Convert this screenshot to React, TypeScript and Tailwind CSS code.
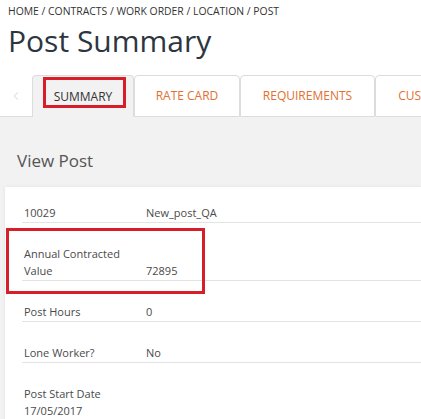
import React from "react";
import { ChevronLeft } from "lucide-react";

const font = { fontFamily: '"Open Sans", "Liberation Sans", sans-serif' };

type Row = {
  label: React.ReactNode;
  value?: string;
  first?: boolean;
  marked?: boolean;
};

const rows: Row[] = [
  { label: "10029", value: "New_post_QA", first: true },
  {
    label: (
      <>
        Annual Contracted
        <br />
        Value
      </>
    ),
    value: "72895",
    marked: true,
  },
  { label: "Post Hours", value: "0" },
  { label: "Lone Worker?", value: "No" },
  {
    label: (
      <>
        Post Start Date
        <br />
        17/05/2017
      </>
    ),
  },
];

const tabs = [
  { name: "RATE CARD", width: "w-[106px]" },
  { name: "REQUIREMENTS", width: "w-[135px]" },
  { name: "CUSTOMER", width: "w-[110px]" },
];

export default function App() {
  return (
    <div
      className="h-[419px] w-[421px] overflow-hidden bg-white text-[#555]"
      style={font}
    >
      <div className="px-[8px] pt-[4px] text-[10.4px] leading-[14px] text-[#333] whitespace-nowrap">
        HOME / CONTRACTS / WORK ORDER / LOCATION / POST
      </div>
      <h1 className="mt-[3px] px-[8px] text-[30px] leading-[40px] text-[#2d3640] whitespace-nowrap">
        Post Summary
      </h1>

      <div className="mt-[14px] flex h-[42px] items-stretch">
        <div className="flex w-[32px] shrink-0 items-center justify-center border-b border-[#dcdcdc] text-[#c9c9c9]">
          <ChevronLeft size={14} strokeWidth={1.3} />
        </div>
        <div className="relative flex w-[102px] shrink-0 items-center justify-center rounded-t-[4px] border border-b-0 border-[#dcdcdc] bg-[#f2f2f2] text-[12px] text-[#333]">
          SUMMARY
          <div className="absolute left-[10px] top-[1px] h-[31px] w-[83px] border-[3px] border-[#d71f2b]" />
        </div>
        {tabs.map((t) => (
          <div
            key={t.name}
            className={`flex ${t.width} shrink-0 items-center justify-center rounded-t-[4px] border border-[#dcdcdc] bg-white text-[12px] text-[#e2702f] whitespace-nowrap`}
          >
            {t.name}
          </div>
        ))}
      </div>

      <div className="bg-[#f2f2f2] h-full">
        <div className="pl-[17px] pt-[32px] pb-[14px] text-[17px] leading-[24px] text-[#555]">
          View Post
        </div>
        <div className="ml-[5px] bg-white pl-[17px] shadow-[0_0_3px_rgba(0,0,0,0.08)] h-full">
          {rows.map((r, i) => (
            <div
              key={i}
              className={`relative flex items-end border-b border-[#e3e3e3] pl-[2px] pb-[1px] text-[11px] leading-[17px] text-[#4a4a4a] ${
                r.first ? "pt-[17px]" : "pt-[22px]"
              }`}
            >
              <div className="w-[122px] shrink-0">{r.label}</div>
              <div>{r.value}</div>
              {r.marked && (
                <div className="absolute left-[-16px] top-[5px] h-[66px] w-[199px] border-[3px] border-[#d71f2b]" />
              )}
            </div>
          ))}
        </div>
      </div>
    </div>
  );
}
